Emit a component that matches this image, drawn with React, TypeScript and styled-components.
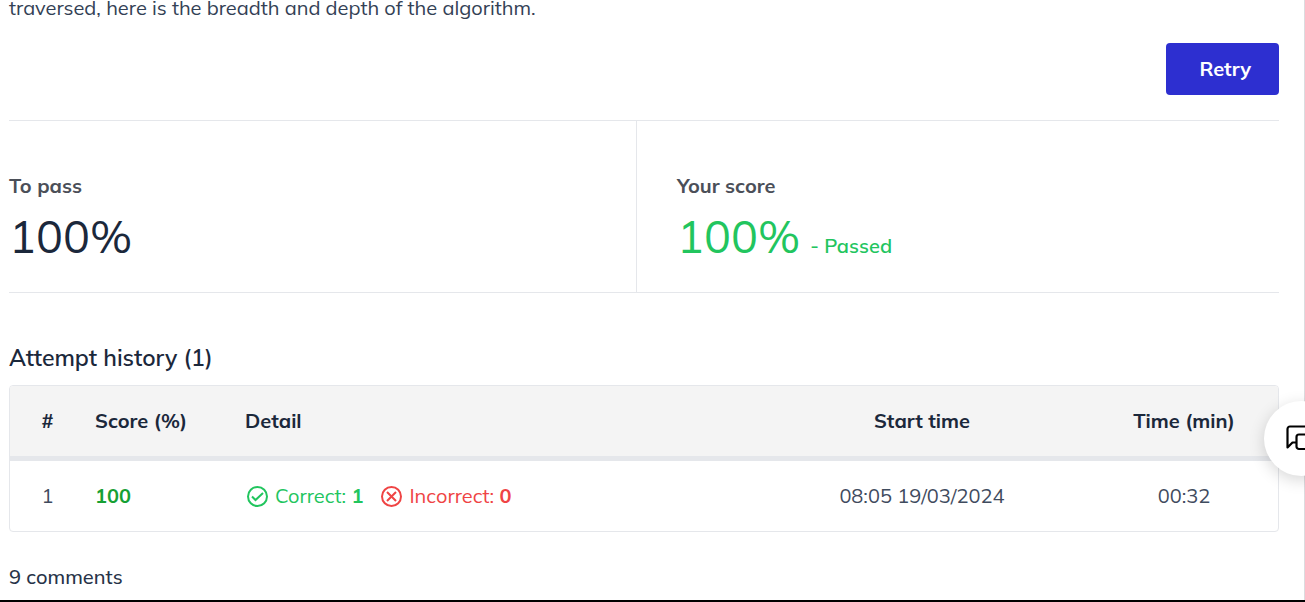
import React from "react";
import styled, { createGlobalStyle } from "styled-components";

const GlobalStyle = createGlobalStyle`
  * { box-sizing: border-box; }
  body {
    margin: 0;
    border-bottom: 2px solid #000;
    background: #fff;
    color: #1b283b;
    font-family: Mulish, Lato, "Open Sans", sans-serif;
    font-size: 20px;
    line-height: 28px;
    overflow: hidden;
  }
`;

const Page = styled.main`
  padding: 0 25px 9px 9px;
  border-right: 1px solid #dcdcdf;
`;

const Intro = styled.p`
  margin: 0;
  line-height: 16px;
  color: #334155;
`;

const Actions = styled.div`
  display: flex;
  justify-content: flex-end;
  padding: 27px 0 25px;
`;

const RetryButton = styled.button`
  height: 52px;
  padding: 0 28px 0 33px;
  border: 0;
  border-radius: 4px;
  background: #2d2fd0;
  color: #fff;
  font: 700 20px/28px Mulish, Lato, sans-serif;
`;

const Scores = styled.section`
  display: grid;
  grid-template-columns: 628px 1fr;
  border-top: 1px solid #e5e7eb;
  border-bottom: 1px solid #e5e7eb;
`;

const ScoreBox = styled.div<{ $divided?: boolean }>`
  padding: 51px 0 20px ${(p) => (p.$divided ? 0 : 40)}px;
  border-right: ${(p) => (p.$divided ? "1px solid #e5e7eb" : "0")};
`;

const ScoreLabel = styled.h3`
  margin: 0;
  font-size: 20px;
  font-weight: 700;
  line-height: 28px;
  color: #4b4f58;
`;

const ScoreValue = styled.div<{ $passed?: boolean }>`
  font-size: 45px;
  line-height: 72px;
  color: ${(p) => (p.$passed ? "#22c55e" : "#1b283b")};
`;

const Verdict = styled.span`
  margin-left: 10px;
  font-size: 20px;
  font-weight: 600;
  line-height: 28px;
`;

const HistoryTitle = styled.h2`
  margin: 49px 0 11px;
  font-size: 23px;
  font-weight: 600;
  line-height: 32px;
`;

const HistoryTable = styled.table`
  width: 100%;
  table-layout: fixed;
  border: 1px solid #e5e7eb;
  border-radius: 4px;
  border-spacing: 0;
  overflow: hidden;
`;

const Column = styled.col<{ $width?: string }>`
  width: ${(p) => p.$width ?? "auto"};
`;

const HeadCell = styled.th<{ $center?: boolean }>`
  height: 75px;
  padding: 0 10px;
  background: #f4f4f4;
  border-bottom: 5px solid #e5e7eb;
  font-weight: 700;
  text-align: ${(p) => (p.$center ? "center" : "left")};
`;

const Cell = styled.td<{ $center?: boolean }>`
  height: 70px;
  padding: 0 10px;
  color: #3f4b5e;
  text-align: ${(p) => (p.$center ? "center" : "left")};
`;

const Points = styled.span`
  font-weight: 700;
  color: #16a034;
`;

const Results = styled.div`
  display: flex;
  gap: 16px;
`;

const Result = styled.span<{ $color: string }>`
  display: flex;
  align-items: center;
  gap: 6px;
  color: ${(p) => p.$color};
  white-space: pre;
`;

const Comments = styled.p`
  margin: 31px 0 0;
  font-weight: 500;
  color: #273348;
`;

const ChatButton = styled.button`
  position: fixed;
  top: 401px;
  right: -34px;
  display: flex;
  align-items: center;
  justify-content: center;
  width: 75px;
  height: 75px;
  padding: 0;
  border: 0;
  border-radius: 50%;
  background: #fff;
  color: #000;
  box-shadow: 0 4px 16px rgba(0, 0, 0, 0.16);
`;

const CheckIcon = () => (
  <svg width="24" height="24" viewBox="0 0 24 24" fill="none" stroke="currentColor" strokeWidth="2" aria-hidden="true">
    <circle cx="12.5" cy="12.5" r="9.5" />
    <path d="M7 12.5l3.5 3.5 7.5-7" />
  </svg>
);

const CrossIcon = () => (
  <svg width="24" height="24" viewBox="0 0 24 24" fill="none" stroke="currentColor" strokeWidth="2" aria-hidden="true">
    <circle cx="12.5" cy="12.5" r="9.5" />
    <path d="M8 8l9 9M17 8l-9 9" />
  </svg>
);

const ChatIcon = () => (
  <svg width="32" height="32" viewBox="0 0 32 32" fill="none" stroke="currentColor" strokeWidth="2.2" strokeLinejoin="round" aria-hidden="true">
    <path d="M24 10V5.5a2 2 0 0 0-2-2H4A2.5 2.5 0 0 0 1.5 6v18.5l5-5H10" />
    <path d="M13 11.5h14a2.5 2.5 0 0 1 2.5 2.5v15l-3-3H13a2.5 2.5 0 0 1-2.5-2.500V14a2.5 2.5 0 0 1 2.5-2.500z" />
  </svg>
);

export default function App() {
  return (
    <>
      <GlobalStyle />
      <Page>
        <Intro>traversed, here is the breadth and depth of the algorithm.</Intro>
        <Actions>
          <RetryButton type="button">Retry</RetryButton>
        </Actions>
        <Scores>
          <ScoreBox $divided>
            <ScoreLabel>To pass</ScoreLabel>
            <ScoreValue>100%</ScoreValue>
          </ScoreBox>
          <ScoreBox>
            <ScoreLabel>Your score</ScoreLabel>
            <ScoreValue $passed>
              100%<Verdict>- Passed</Verdict>
            </ScoreValue>
          </ScoreBox>
        </Scores>
        <HistoryTitle>Attempt history (1)</HistoryTitle>
        <HistoryTable>
          <colgroup>
            <Column $width="75px" />
            <Column $width="150px" />
            <Column />
            <Column $width="336px" />
            <Column $width="188px" />
          </colgroup>
          <thead>
            <tr>
              <HeadCell scope="col" $center>#</HeadCell>
              <HeadCell scope="col">Score (%)</HeadCell>
              <HeadCell scope="col">Detail</HeadCell>
              <HeadCell scope="col" $center>Start time</HeadCell>
              <HeadCell scope="col" $center>Time (min)</HeadCell>
            </tr>
          </thead>
          <tbody>
            <tr>
              <Cell $center>1</Cell>
              <Cell><Points>100</Points></Cell>
              <Cell>
                <Results>
                  <Result $color="#22c55e">
                    <CheckIcon />
                    <span>Correct: <b>1</b></span>
                  </Result>
                  <Result $color="#ef4444">
                    <CrossIcon />
                    <span>Incorrect: <b>0</b></span>
                  </Result>
                </Results>
              </Cell>
              <Cell $center>08:05 19/03/2024</Cell>
              <Cell $center>00:32</Cell>
            </tr>
          </tbody>
        </HistoryTable>
        <Comments>9 comments</Comments>
      </Page>
      <ChatButton type="button" aria-label="Open chat">
        <ChatIcon />
      </ChatButton>
    </>
  );
}
